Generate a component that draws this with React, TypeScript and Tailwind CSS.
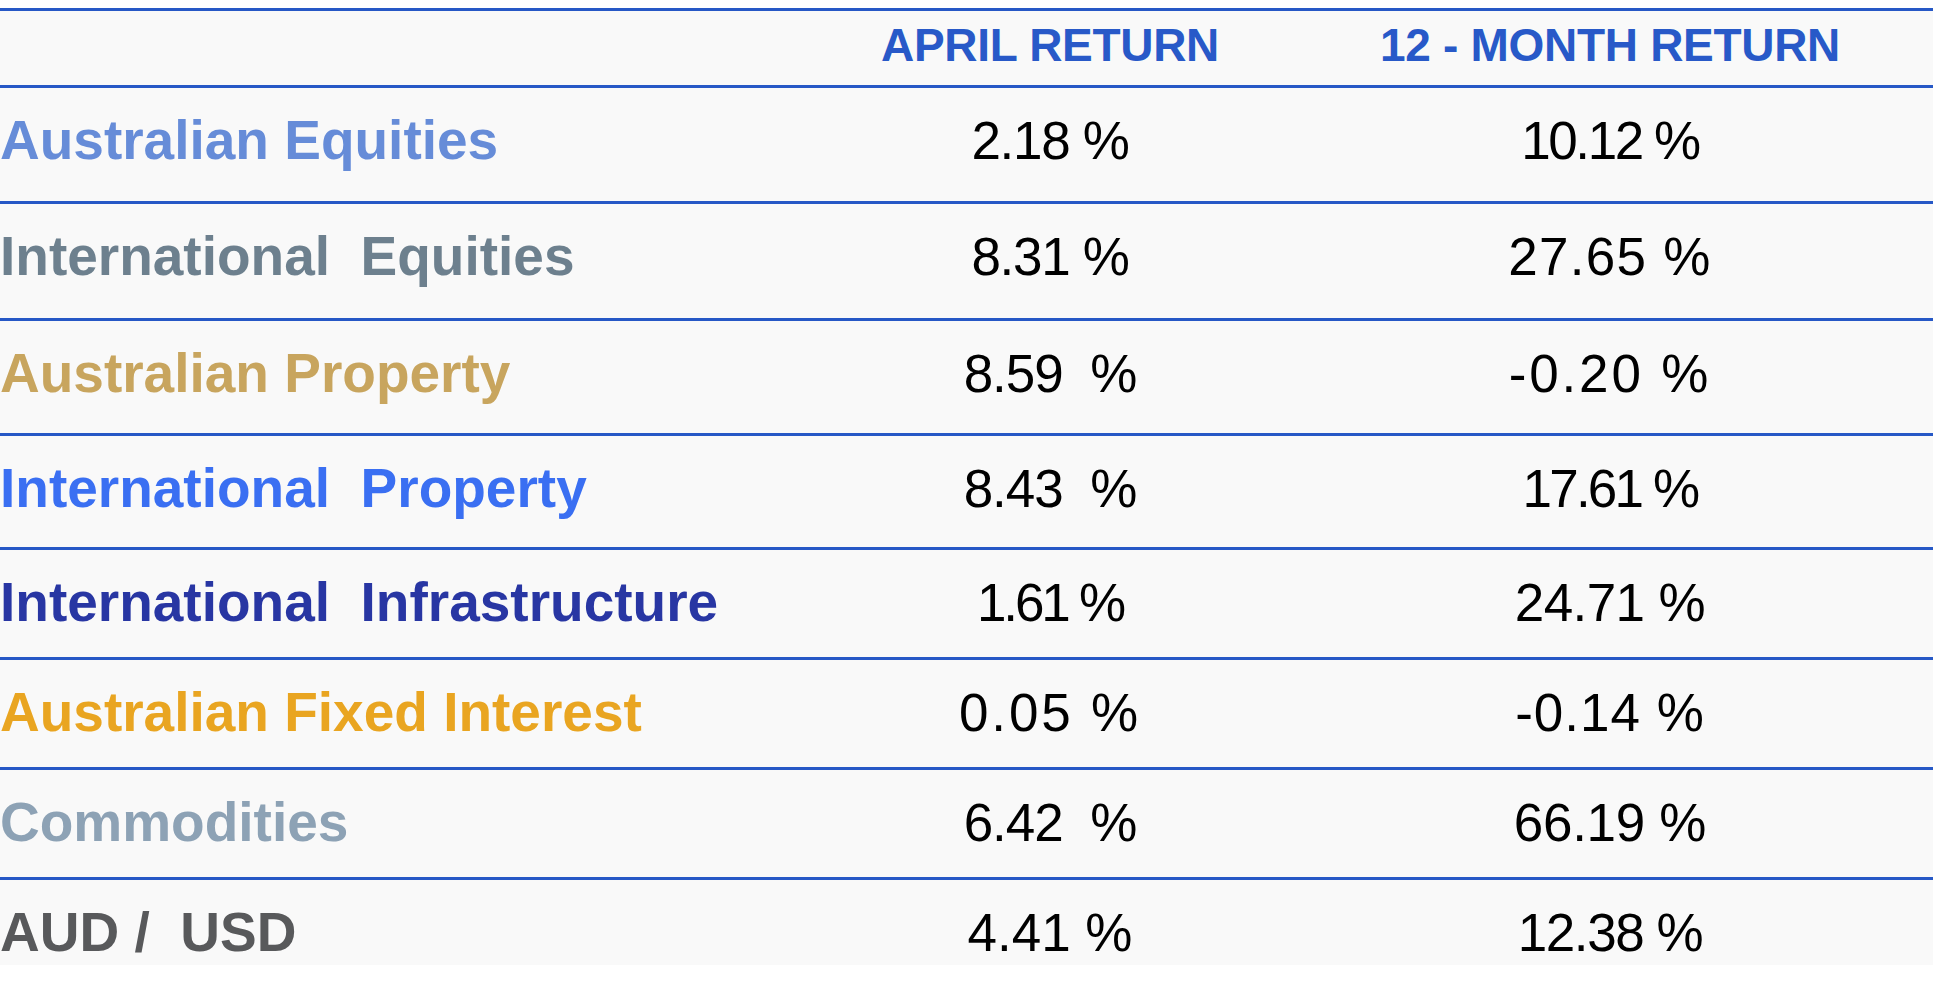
type Row = {
  label: string
  color: string
  april: string
  aprilTrack: string
  year: string
  yearTrack: string
  height: string
}

const rows: Row[] = [
  { label: 'Australian Equities', color: 'text-[#668cd8]', april: '2.18 %', aprilTrack: 'tracking-[-1.3px]', year: '10.12 %', yearTrack: 'tracking-[-2.4px]', height: 'h-[116px]' },
  { label: 'International  Equities', color: 'text-[#6d808e]', april: '8.31 %', aprilTrack: 'tracking-[-1.3px]', year: '27.65 %', yearTrack: 'tracking-[1.3px]', height: 'h-[117px]' },
  { label: 'Australian Property', color: 'text-[#c8a55e]', april: '8.59  %', aprilTrack: 'tracking-[-1px]', year: '-0.20 %', yearTrack: 'tracking-[2.8px]', height: 'h-[115px]' },
  { label: 'International  Property', color: 'text-[#3a6ff2]', april: '8.43  %', aprilTrack: 'tracking-[-1px]', year: '17.61 %', yearTrack: 'tracking-[-2.8px]', height: 'h-[114px]' },
  { label: 'International  Infrastructure', color: 'text-[#2836a3]', april: '1.61 %', aprilTrack: 'tracking-[-3.2px]', year: '24.71 %', yearTrack: 'tracking-[-0.6px]', height: 'h-[110px]' },
  { label: 'Australian Fixed Interest', color: 'text-[#e9a521]', april: '0.05 %', aprilTrack: 'tracking-[2.8px]', year: '-0.14 %', yearTrack: 'tracking-[1px]', height: 'h-[110px]' },
  { label: 'Commodities', color: 'text-[#8da2b5]', april: '6.42  %', aprilTrack: 'tracking-[-1px]', year: '66.19 %', yearTrack: 'tracking-[-0.3px]', height: 'h-[110px]' },
  { label: 'AUD /  USD', color: 'text-[#58595b]', april: '4.41 %', aprilTrack: 'tracking-[0px]', year: '12.38 %', yearTrack: 'tracking-[-1.4px]', height: 'h-[88px]' },
]

const font = 'font-["Liberation_Sans","Arial",sans-serif]'

export default function App() {
  return (
    <div className={`min-h-screen bg-white pt-[8px] ${font}`}>
      <div className="w-[1933px] bg-[#f9f9f9]">
        {/* header */}
        <div className="grid h-[77px] grid-cols-[813px_474px_646px] items-baseline border-t-[3px] border-[#2658c6] pt-[11px] text-[46px] font-bold leading-none text-[#2859c8]">
          <div />
          <div className="text-center tracking-[-0.3px]">APRIL RETURN</div>
          <div className="text-center tracking-[-0.3px]">12 - MONTH RETURN</div>
        </div>

        {rows.map((r) => (
          <div
            key={r.label}
            className={`grid grid-cols-[813px_474px_646px] items-baseline border-t-[3px] border-[#2658c6] pt-[25px] leading-none ${r.height}`}
          >
            <div className={`whitespace-pre text-[55px] font-bold ${r.color}`}>{r.label}</div>
            <div className={`whitespace-pre text-center text-[53px] text-black ${r.aprilTrack}`}>{r.april}</div>
            <div className={`whitespace-pre text-center text-[53px] text-black ${r.yearTrack}`}>{r.year}</div>
          </div>
        ))}
      </div>
    </div>
  )
}
